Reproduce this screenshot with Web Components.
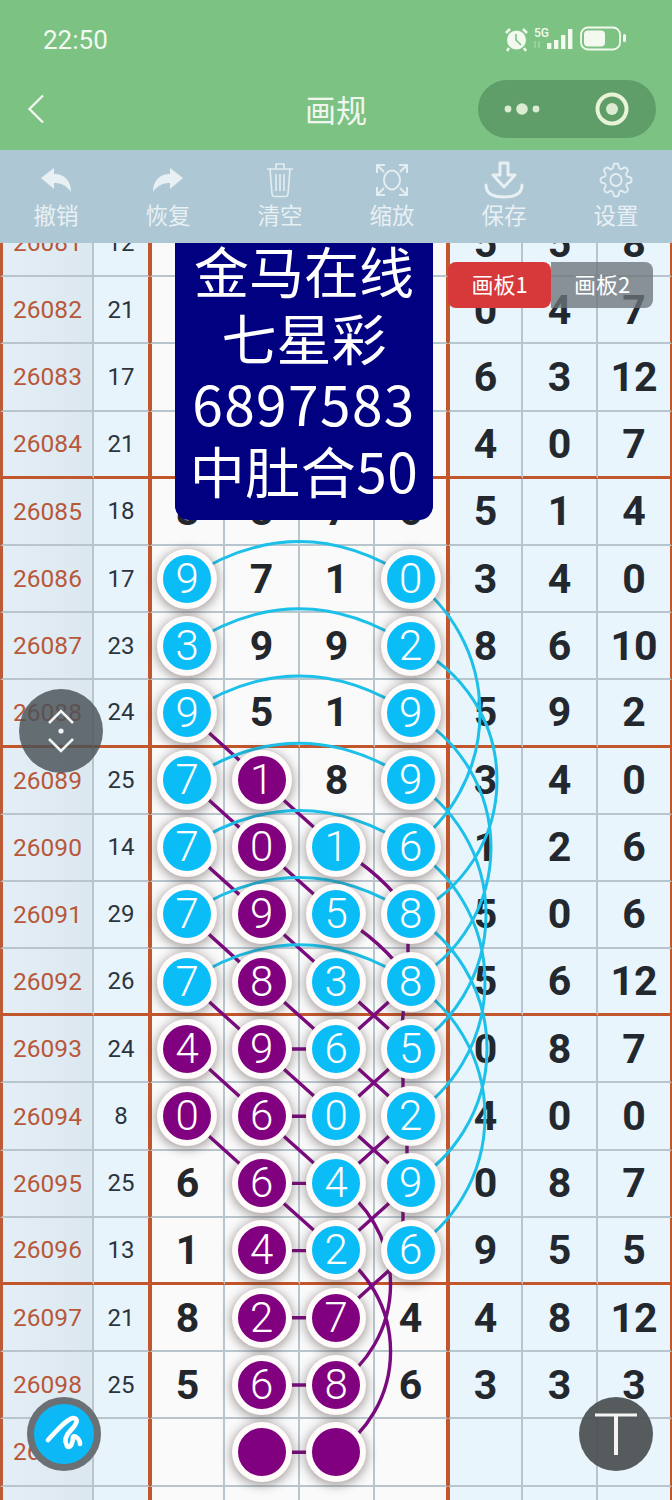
<!DOCTYPE html>
<html lang="zh">
<head>
<meta charset="utf-8">
<title>画规</title>
<style>
    html, body { margin: 0; padding: 0; background: #fff; }
    body { width: 672px; height: 1500px; overflow: hidden; font-family: Roboto, "Noto Sans CJK SC", sans-serif; }
</style>
</head>
<body>
<draw-app>
    <status-bar slot="top"></status-bar>
    <nav-bar slot="top">画规</nav-bar>
    <tool-bar slot="top"></tool-bar>
    <chart-board></chart-board>
</draw-app>

<script>
const ROW_H = 67.2;
const CELL_COLUMNS = "94px 56px 75px 75px 75px 73px 75px 75px 74px";
const BALL_COLUMNS = "93px 57px repeat(4, 74.5px) repeat(3, 74.67px)";

// first period on the sheet is 26081, the last row has no number in it
const ROWS = [
    ["26081", "12", "", "", "", "", "5", "5", "8"],
    ["26082", "21", "", "", "", "", "0", "4", "7"],
    ["26083", "17", "", "", "", "", "6", "3", "12"],
    ["26084", "21", "", "", "", "", "4", "0", "7"],
    ["26085", "18", "8", "8", "7", "6", "5", "1", "4"],
    ["26086", "17", "b9", "7", "1", "b0", "3", "4", "0"],
    ["26087", "23", "b3", "9", "9", "b2", "8", "6", "10"],
    ["26088", "24", "b9", "5", "1", "b9", "5", "9", "2"],
    ["26089", "25", "b7", "p1", "8", "b9", "3", "4", "0"],
    ["26090", "14", "b7", "p0", "b1", "b6", "1", "2", "6"],
    ["26091", "29", "b7", "p9", "b5", "b8", "5", "0", "6"],
    ["26092", "26", "b7", "p8", "b3", "b8", "5", "6", "12"],
    ["26093", "24", "p4", "p9", "b6", "b5", "0", "8", "7"],
    ["26094", "8", "p0", "p6", "b0", "b2", "4", "0", "0"],
    ["26095", "25", "6", "p6", "b4", "b9", "0", "8", "7"],
    ["26096", "13", "1", "p4", "b2", "b6", "9", "5", "5"],
    ["26097", "21", "8", "p2", "p7", "4", "4", "8", "12"],
    ["26098", "25", "5", "p6", "p8", "6", "3", "3", "3"],
    ["26099", "", "", "p", "p", "", "", "", ""],
    ["", "", "", "", "", "", "", "", ""]
];

class DrawApp extends HTMLElement {
    constructor() {
        super();
        this.shadowDOM = this.attachShadow({mode: "open"});
        this.shadowDOM.innerHTML = `
            <style>
                :host {
                    display: flex;
                    flex-direction: column;
                    width: 672px;
                    height: 1500px;
                    overflow: hidden;
                    position: relative;
                }
                .top { display: block; flex: none; }
                .main { display: block; flex: 1; min-height: 0; }
            </style>
            <div class="top"><slot name="top"></slot></div>
            <div class="main"><slot></slot></div>`;
    }
}

class StatusBar extends HTMLElement {
    constructor() {
        super();
        this.shadowDOM = this.attachShadow({mode: "open"});
        this.shadowDOM.innerHTML = `
            <style>
                :host {
                    display: flex;
                    justify-content: space-between;
                    align-items: center;
                    height: 78px;
                    box-sizing: border-box;
                    padding: 0 45px 0 43px;
                    background: #7bc283;
                    color: #f3f9ef;
                }
                .time { font: 400 26px Roboto, sans-serif; position: relative; top: 1px; }
                svg { display: block; }
            </style>
            <span class="time">22:50</span>
            <svg width="124" height="26" viewBox="0 0 124 26">
                <g fill="none" stroke="#f3f9ef">
                    <path d="M3 7 L7 3 M20 3 L24 7" stroke-width="2.5"/>
                    <path d="M6 22 L4 25 M21 22 L23 25" stroke-width="2.5"/>
                </g>
                <circle cx="13.5" cy="14" r="9.5" fill="#f3f9ef"/>
                <path d="M13 8 V14 L18 19" fill="none" stroke="#7bc283" stroke-width="1.6"/>
                <text x="31" y="11" font-family="Roboto, sans-serif" font-size="12" font-weight="500" fill="#f3f9ef">5G</text>
                <path d="M32 15 V22 M36 15 V22" stroke="#a9dcae" stroke-width="1.2"/>
                <g fill="#f3f9ef">
                    <rect x="44" y="17" width="4.4" height="6"/>
                    <rect x="51" y="14" width="4.4" height="9"/>
                    <rect x="58" y="9" width="4.4" height="14"/>
                    <rect x="65" y="3" width="4.4" height="20"/>
                </g>
                <rect x="78" y="1.5" width="39" height="22" rx="7" fill="none" stroke="#f3f9ef" stroke-width="1.8"/>
                <rect x="81" y="4.5" width="21" height="16" rx="4" fill="#f3f9ef"/>
                <rect x="120" y="8" width="3" height="8" rx="1.5" fill="#f3f9ef"/>
            </svg>`;
    }
}

class NavBar extends HTMLElement {
    constructor() {
        super();
        this.shadowDOM = this.attachShadow({mode: "open"});
        this.shadowDOM.innerHTML = `
            <style>
                :host {
                    display: grid;
                    grid-template-columns: 178px 1fr 178px;
                    align-items: center;
                    justify-items: center;
                    height: 72px;
                    box-sizing: border-box;
                    padding: 0 16px 10px 16px;
                    background: #7bc283;
                    color: #f0f6ee;
                    font: 400 31px "Noto Sans CJK SC", sans-serif;
                }
                .back { justify-self: start; margin-left: 11px; }
                .title { position: relative; top: -1px; }
                .capsule {
                    display: flex;
                    align-items: center;
                    justify-content: space-between;
                    width: 178px;
                    height: 58px;
                    box-sizing: border-box;
                    padding: 0 27px 0 26px;
                    border-radius: 29px;
                    background: #5f9d69;
                }
                svg { display: block; }
            </style>
            <svg class="back" width="18" height="30" viewBox="0 0 18 30">
                <path d="M16 1.5 L2.5 15 L16 28.5" fill="none" stroke="#f0f6ee" stroke-width="2.4"/>
            </svg>
            <span class="title"><slot></slot></span>
            <div class="capsule">
                <svg width="36" height="14" viewBox="0 0 36 14">
                    <circle cx="4" cy="7" r="3.4" fill="#dcecd2"/>
                    <circle cx="18" cy="7" r="5.8" fill="#dcecd2"/>
                    <circle cx="32" cy="7" r="3.4" fill="#dcecd2"/>
                </svg>
                <svg width="34" height="34" viewBox="0 0 34 34">
                    <circle cx="17" cy="17" r="14.5" fill="none" stroke="#e8f3d8" stroke-width="4"/>
                    <circle cx="17" cy="17" r="6" fill="#dcecd2"/>
                </svg>
            </div>`;
    }
}

class ToolItem extends HTMLElement {
    constructor() {
        super();
        this.shadowDOM = this.attachShadow({mode: "open"});
        this.shadowDOM.innerHTML = `
            <style>
                :host {
                    display: flex;
                    flex-direction: column;
                    align-items: center;
                    color: #e8f0f3;
                }
                .icon {
                    display: flex;
                    align-items: center;
                    justify-content: center;
                    height: 40px;
                }
                .label {
                    font: 400 22.5px/30px "Noto Sans CJK SC", sans-serif;
                    margin-top: -1px;
                }
            </style>
            <div class="icon"><slot name="icon"></slot></div>
            <div class="label"><slot></slot></div>`;
    }
}

const GEAR = "M19.4 15a1.65 1.65 0 0 0 .33 1.82l.06.06a2 2 0 0 1 0 2.83 2 2 0 0 1-2.83 0l-.06-.06a1.65 1.65 0 0 0-1.82-.33 1.65 1.65 0 0 0-1 1.51V21a2 2 0 0 1-2 2 2 2 0 0 1-2-2v-.09A1.65 1.65 0 0 0 9 19.4a1.65 1.65 0 0 0-1.82.33l-.06.06a2 2 0 0 1-2.83 0 2 2 0 0 1 0-2.83l.06-.06a1.65 1.65 0 0 0 .33-1.82 1.65 1.65 0 0 0-1.51-1H3a2 2 0 0 1-2-2 2 2 0 0 1 2-2h.09A1.65 1.65 0 0 0 4.6 9a1.65 1.65 0 0 0-.33-1.82l-.06-.06a2 2 0 0 1 0-2.83 2 2 0 0 1 2.83 0l.06.06a1.65 1.65 0 0 0 1.82.33H9a1.65 1.65 0 0 0 1-1.51V3a2 2 0 0 1 2-2 2 2 0 0 1 2 2v.09a1.65 1.65 0 0 0 1 1.51 1.65 1.65 0 0 0 1.82-.33l.06-.06a2 2 0 0 1 2.83 0 2 2 0 0 1 0 2.83l-.06.06a1.65 1.65 0 0 0-.33 1.82V9a1.65 1.65 0 0 0 1.51 1H21a2 2 0 0 1 2 2 2 2 0 0 1-2 2h-.09a1.65 1.65 0 0 0-1.51 1z";

class ToolBar extends HTMLElement {
    constructor() {
        super();
        this.shadowDOM = this.attachShadow({mode: "open"});
        const undo = "M0 10 L13 0 V6 C24 6 30 13 30 24 C25 17 20 15 13 15 V21 Z";
        this.shadowDOM.innerHTML = `
            <style>
                :host {
                    display: grid;
                    grid-template-columns: repeat(6, 112px);
                    height: 93px;
                    box-sizing: border-box;
                    padding-top: 10px;
                    background: #adc7d4;
                }
                svg { display: block; }
            </style>
            <tool-item>
                <svg slot="icon" width="30" height="24" viewBox="0 0 30 24"><path d="${undo}" fill="#e8f0f3"/></svg>撤销
            </tool-item>
            <tool-item>
                <svg slot="icon" width="30" height="24" viewBox="0 0 30 24"><path d="${undo}" fill="#e8f0f3" transform="matrix(-1 0 0 1 30 0)"/></svg>恢复
            </tool-item>
            <tool-item>
                <svg slot="icon" width="28" height="36" viewBox="0 0 28 36" fill="none" stroke="#e4edf1" stroke-width="1.6">
                    <path d="M1 7 H27 M10 7 V2 H18 V7"/>
                    <path d="M4 7 L6 32 Q6.2 34.5 9 34.5 H19 Q21.8 34.5 22 32 L24 7"/>
                    <path d="M10 12 V29 M14 12 V29 M18 12 V29"/>
                </svg>清空
            </tool-item>
            <tool-item>
                <svg slot="icon" width="34" height="34" viewBox="0 0 34 34" fill="none" stroke="#e4edf1" stroke-width="2">
                    <path d="M2 10 V2 H10 M2 2 L9 9"/>
                    <path d="M24 2 H32 V10 M32 2 L25 9"/>
                    <path d="M2 24 V32 H10 M2 32 L9 25"/>
                    <path d="M24 32 H32 V24 M32 32 L25 25"/>
                    <ellipse cx="17" cy="17" rx="8" ry="9.5"/>
                </svg>缩放
            </tool-item>
            <tool-item>
                <svg slot="icon" width="40" height="38" viewBox="0 0 40 38" fill="none" stroke="#e8f0f3" stroke-width="3">
                    <path d="M16 2 H24 V14 H31 L20 26 L9 14 H16 Z" stroke-linejoin="round"/>
                    <path d="M2 24 C2 33 9 36 20 36 C31 36 38 33 38 24" stroke-linecap="round"/>
                </svg>保存
            </tool-item>
            <tool-item>
                <svg slot="icon" width="34" height="36" viewBox="0 0 24 24" fill="none" stroke="#e4edf1" stroke-width="1.3" preserveAspectRatio="none">
                    <circle cx="12" cy="12" r="4"/>
                    <path d="${GEAR}"/>
                </svg>设置
            </tool-item>`;
    }
}

class LottoBall extends HTMLElement {
    constructor() {
        super();
        this.shadowDOM = this.attachShadow({mode: "open"});
        this.shadowDOM.innerHTML = `
            <style>
                :host {
                    display: flex;
                    align-items: center;
                    justify-content: center;
                    place-self: center;
                    width: 60px;
                    height: 60px;
                    box-sizing: border-box;
                    border: 6px solid #fffbfa;
                    border-radius: 50%;
                    box-shadow: 0 2px 10px 2px rgba(70, 55, 55, 0.42);
                    color: #fff;
                    font: 300 42px/1 Roboto, sans-serif;
                }
                :host([tone="blue"]) { background: #0abdf7; }
                :host([tone="purple"]) { background: #800080; }
            </style>
            <slot></slot>`;
    }
}

class BoardBanner extends HTMLElement {
    constructor() {
        super();
        this.shadowDOM = this.attachShadow({mode: "open"});
        this.shadowDOM.innerHTML = `
            <style>
                :host {
                    position: absolute;
                    left: 175px;
                    top: 0;
                    width: 258px;
                    height: 277px;
                    box-sizing: border-box;
                    padding-bottom: 18px;
                    display: flex;
                    flex-direction: column;
                    justify-content: flex-end;
                    overflow: hidden;
                    background: #000080;
                    border-radius: 0 0 14px 14px;
                    color: #fff;
                    text-align: center;
                    font: 400 55px/66.5px "Noto Sans CJK SC", sans-serif;
                }
                div { white-space: nowrap; }
                .num { letter-spacing: 1.4px; }
                .mix { letter-spacing: 0.5px; }
            </style>
            <div>金马在线</div>
            <div>七星彩</div>
            <div class="num">6897583</div>
            <div class="mix">中肚合50</div>`;
    }
}

class BoardTabs extends HTMLElement {
    constructor() {
        super();
        this.shadowDOM = this.attachShadow({mode: "open"});
        this.shadowDOM.innerHTML = `
            <style>
                :host {
                    position: absolute;
                    left: 448px;
                    top: 19px;
                    display: flex;
                    height: 46px;
                    color: #fff;
                    font: 400 22px "Noto Sans CJK SC", sans-serif;
                }
                div {
                    display: flex;
                    align-items: center;
                    justify-content: center;
                    box-sizing: border-box;
                    padding-bottom: 4px;
                    width: 102px;
                    border-radius: 0 8px 8px 0;
                    background: rgba(108, 116, 122, 0.78);
                }
                .on {
                    width: 103px;
                    border-radius: 8px;
                    background: #d7393a;
                    position: relative;
                }
            </style>
            <div class="on">画板1</div>
            <div>画板2</div>`;
    }
}

class FloatButton extends HTMLElement {
    constructor() {
        super();
        this.shadowDOM = this.attachShadow({mode: "open"});
        this.shadowDOM.innerHTML = `
            <style>
                :host {
                    position: absolute;
                    display: flex;
                    align-items: center;
                    justify-content: center;
                    box-sizing: border-box;
                    border-radius: 50%;
                }
                :host([kind="move"]) {
                    left: 19px;
                    top: 446px;
                    width: 84px;
                    height: 84px;
                    background: rgba(72, 80, 85, 0.82);
                }
                :host([kind="brush"]) {
                    left: 27px;
                    top: 1154px;
                    width: 74px;
                    height: 74px;
                    border: 7px solid #6b7074;
                    background: #0db8f6;
                }
                :host([kind="top"]) {
                    left: 579px;
                    top: 1154px;
                    width: 74px;
                    height: 74px;
                    background: rgba(78, 82, 85, 0.95);
                }
                svg { display: block; }
            </style>
            <slot></slot>`;
    }
}

class ChartBoard extends HTMLElement {
    constructor() {
        super();
        this.shadowDOM = this.attachShadow({mode: "open"});
    }

    connectedCallback() {
        this.render();
    }

    cellHtml(value, col, rowIndex) {
        let cls = "cell";
        if (col === 0) cls += " period";
        else if (col === 1) cls += " sum";
        else if (col < 6) cls += " mid";
        else cls += " right";
        if ((rowIndex + 1) % 4 === 0) cls += " thick";
        const text = /^[bp]/.test(value) ? "" : value;
        return `<div class="${cls}">${text}</div>`;
    }

    linesHtml() {
        const X = {a: 187, b: 261.5, c: 336.5, d: 411};
        const Y = n => (n - 81 + 0.5) * ROW_H;
        const line = (c1, r1, c2, r2) => `M${X[c1]} ${Y(r1)} L${X[c2]} ${Y(r2)}`;
        const purple = [];
        const blue = [];

        for (let r = 88; r <= 94; r++) purple.push(line("a", r, "b", r + 1));
        for (let r = 89; r <= 95; r++) purple.push(line("b", r, "c", r + 1));
        for (let r = 92; r <= 94; r++) purple.push(line("c", r, "d", r + 1));
        for (let r = 92; r <= 96; r++) purple.push(line("d", r, "c", r + 1));
        for (const r of [93, 94, 95, 96, 97, 98, 99]) purple.push(line("b", r, "c", r));

        // c to d, a little bent
        for (const r of [90, 91]) {
            purple.push(`M${X.c} ${Y(r)} Q382 ${(Y(r) + Y(r + 1)) / 2 - 8} ${X.d} ${Y(r + 1)}`);
        }
        // short run down the d column, only the gaps between balls show
        [[408, 408, 91], [406, 400, 92], [403, 403, 93], [407, 407, 94], [403, 403, 95]].forEach(([x1, x2, r]) => {
            purple.push(`M${x1} ${Y(r)} L${x2} ${Y(r + 1)}`);
        });
        // long bows on the c column
        purple.push(`M${X.c} ${Y(95)} A121 121 0 0 1 ${X.c} ${Y(98)}`);
        purple.push(`M${X.c} ${Y(96)} A121 121 0 0 1 ${X.c} ${Y(99)}`);

        for (let r = 86; r <= 92; r++) {
            blue.push(`M${X.a} ${Y(r)} Q299 ${Y(r) - 74} ${X.d} ${Y(r)}`);
        }
        // big bows on the right, each one spans four rows
        const peaks = [480, 497, 491, 486, 485, 487, 485];
        peaks.forEach((peak, i) => {
            const r = 86 + i;
            const half = 2 * ROW_H;
            const sag = peak - X.d;
            const radius = (half * half + sag * sag) / (2 * sag);
            blue.push(`M${X.d} ${Y(r)} A${radius} ${radius} 0 0 1 ${X.d} ${Y(r + 4)}`);
        });

        return `
            <path d="${purple.join(" ")}" fill="none" stroke="#7a0a7e" stroke-width="3.4"/>
            <path d="${blue.join(" ")}" fill="none" stroke="#1dc0e8" stroke-width="3"/>`;
    }

    ballsHtml() {
        let html = "";
        ROWS.forEach((row, r) => {
            row.forEach((value, c) => {
                const m = /^([bp])(\d?)$/.exec(value);
                if (!m) return;
                const tone = m[1] === "b" ? "blue" : "purple";
                html += `<lotto-ball tone="${tone}" style="grid-column:${c + 1};grid-row:${r + 1}">${m[2]}</lotto-ball>`;
            });
        });
        return html;
    }

    render() {
        const cells = ROWS.map((row, r) => row.map((v, c) => this.cellHtml(v, c, r)).join("")).join("");
        const height = ROWS.length * ROW_H;
        this.shadowDOM.innerHTML = `
            <style>
                :host {
                    display: block;
                    position: relative;
                    height: 100%;
                    overflow: hidden;
                    background: #fff;
                }
                .sheet {
                    position: relative;
                    margin-top: -33px;
                    width: 672px;
                    height: ${height}px;
                }
                .grid {
                    display: grid;
                    grid-auto-rows: ${ROW_H}px;
                }
                .cells { grid-template-columns: ${CELL_COLUMNS}; }
                .balls { grid-template-columns: ${BALL_COLUMNS}; }
                .layer {
                    position: absolute;
                    left: 0;
                    top: -1px;
                    width: 672px;
                    height: ${height}px;
                }
                .cell {
                    display: flex;
                    align-items: center;
                    justify-content: center;
                    box-sizing: border-box;
                    border-bottom: 2px solid #b9c5cd;
                    border-right: 2px solid #b9c5cd;
                    overflow: hidden;
                    font-family: Roboto, sans-serif;
                }
                .cell.period {
                    background: linear-gradient(90deg, #e3eef6, #dce8f0);
                    border-left: 3px solid #bf5a36;
                    color: #b8583a;
                    font-size: 24.5px;
                }
                .cell.sum {
                    background: #e8f4fc;
                    border-right: 2px solid #c2562c;
                    color: #2b3540;
                    font-size: 24px;
                }
                .cell.mid {
                    background: #fafafa;
                    color: #23272c;
                    font-size: 41px;
                    font-weight: 700;
                }
                .cell.right {
                    background: #e8f5fc;
                    color: #23282f;
                    font-size: 41px;
                    font-weight: 700;
                }
                .cell:nth-child(9n + 3) { border-left: 2px solid #c2562c; }
                .cell:nth-child(9n + 6) { border-right: 2px solid #c2562c; }
                .cell:nth-child(9n + 7) { border-left: 2px solid #c2562c; }
                .cell:nth-child(9n) { border-right: 2px solid #c2562c; }
                .cell.thick { border-bottom: 3px solid #c2562c; }
                svg.layer { display: block; overflow: visible; }
            </style>
            <div class="sheet">
                <div class="grid cells">${cells}</div>
                <svg class="layer" viewBox="0 0 672 ${height}">${this.linesHtml()}</svg>
                <div class="grid balls layer">${this.ballsHtml()}</div>
            </div>
            <board-banner></board-banner>
            <board-tabs></board-tabs>
            <float-button kind="move">
                <svg width="40" height="56" viewBox="0 0 40 56" fill="none" stroke="#f2f5f5" stroke-width="2.6">
                    <path d="M8 20 L20 8 L32 20"/>
                    <path d="M8 36 L20 48 L32 36"/>
                    <circle cx="20" cy="28" r="2.6" fill="#f2f5f5" stroke="none"/>
                </svg>
            </float-button>
            <float-button kind="brush">
                <svg width="60" height="60" viewBox="7 7 60 60" fill="none" stroke="#fff" stroke-width="4.6" stroke-linecap="round" stroke-linejoin="round">
                    <path d="M21 43 C30 33 40 22 46 21 C52 21 50 27 44 33 C38 39 37 44 40 49 C43 52 46 47 46 40 C48 38 53 42 53 47"/>
                </svg>
            </float-button>
            <float-button kind="top">
                <svg width="46" height="44" viewBox="0 0 46 44" fill="none" stroke="#f4f4f4">
                    <path d="M2 3 H44" stroke-width="3"/>
                    <path d="M23 3 V43" stroke-width="4"/>
                </svg>
            </float-button>`;
    }
}

customElements.define("draw-app", DrawApp);
customElements.define("status-bar", StatusBar);
customElements.define("nav-bar", NavBar);
customElements.define("tool-item", ToolItem);
customElements.define("tool-bar", ToolBar);
customElements.define("lotto-ball", LottoBall);
customElements.define("board-banner", BoardBanner);
customElements.define("board-tabs", BoardTabs);
customElements.define("float-button", FloatButton);
customElements.define("chart-board", ChartBoard);
</script>
</body>
</html>
